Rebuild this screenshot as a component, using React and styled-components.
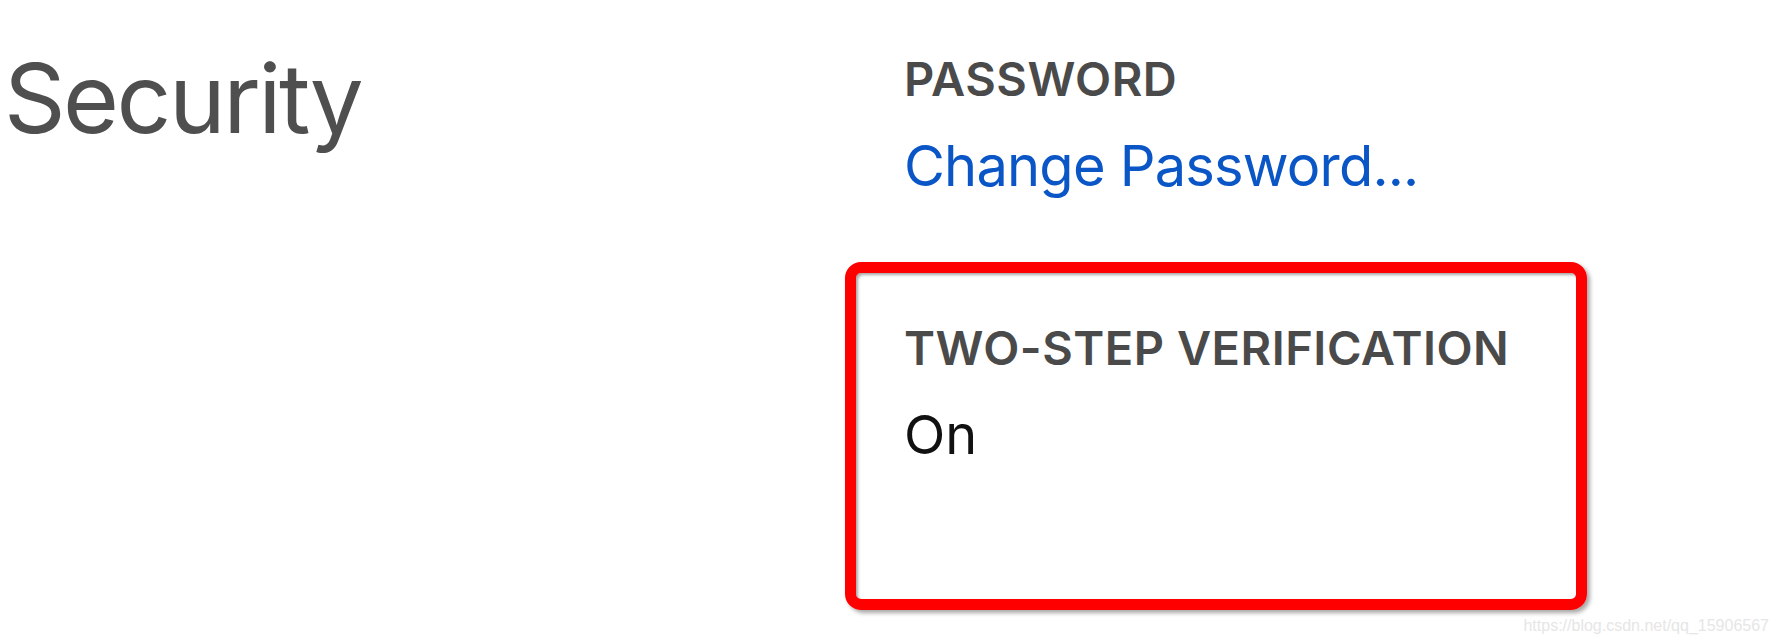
import React from 'react'
import styled, { createGlobalStyle } from 'styled-components'

const GlobalStyle = createGlobalStyle`
  html, body {
    margin: 0;
    padding: 0;
    background: #ffffff;
    font-family: Inter, "Liberation Sans", Arial, sans-serif;
  }
`;

const Page = styled.div`
  position: relative;
  width: 1778px;
  height: 644px;
  display: flex;
  padding-left: 4px;
  box-sizing: border-box;
  overflow: hidden;
`;

const SideColumn = styled.div`
  width: 841px;
  flex-shrink: 0;
  padding-top: 50px;
`;

const PageTitle = styled.h1`
  margin: 0;
  font-size: 96px;
  line-height: 1;
  font-weight: 400;
  letter-spacing: -2.5px;
  color: #4f4f4f;
`;

const MainColumn = styled.div`
  display: flex;
  flex-direction: column;
  padding-top: 55px;
`;

const Section = styled.div`
  padding-left: 59px;
`;

const Label = styled.div`
  font-size: 47px;
  line-height: 1;
  font-weight: 600;
  letter-spacing: 0.5px;
  color: #4a4a4a;
`;

const LinkText = styled.a`
  display: block;
  margin-top: 36px;
  font-size: 56px;
  line-height: 1;
  letter-spacing: -0.8px;
  color: #0b56c6;
  text-decoration: none;
  cursor: pointer;
`;

const Value = styled.div`
  margin-top: 37px;
  font-size: 54px;
  line-height: 1;
  color: #111111;
`;

const HighlightBox = styled.div`
  margin-top: 68px;
  width: 742px;
  height: 348px;
  box-sizing: border-box;
  border: 11px solid #ff0000;
  border-radius: 16px;
  padding: 51px 0 0 48px;
  box-shadow: 3px 3px 4px rgba(0, 0, 0, 0.35), inset 2px 2px 3px rgba(0, 0, 0, 0.35);
`;

const Watermark = styled.span`
  position: absolute;
  right: 9px;
  bottom: 9px;
  font-family: "Liberation Sans", Arial, sans-serif;
  font-size: 16px;
  color: #e6e6e6;
`;

export default function App() {
  return (
    <>
      <GlobalStyle />
      <Page>
        <SideColumn>
          <PageTitle>Security</PageTitle>
        </SideColumn>
        <MainColumn>
          <Section>
            <Label>PASSWORD</Label>
            <LinkText>Change Password...</LinkText>
          </Section>
          <HighlightBox>
            <Label>TWO-STEP VERIFICATION</Label>
            <Value>On</Value>
          </HighlightBox>
        </MainColumn>
        <Watermark>https://blog.csdn.net/qq_15906567</Watermark>
      </Page>
    </>
  )
}
